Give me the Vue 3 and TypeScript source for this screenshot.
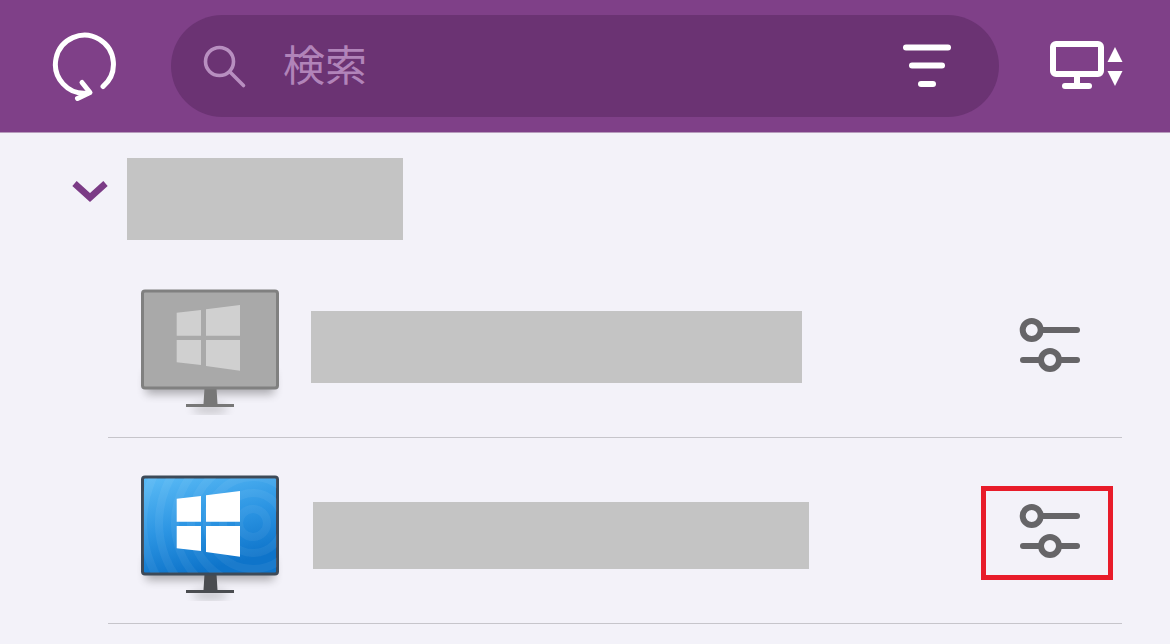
<script setup lang="ts">
interface Machine {
  id: string;
  active: boolean;
  marked: boolean;
}

const machines: Machine[] = [
  { id: 'offline', active: false, marked: false },
  { id: 'online', active: true, marked: true },
];

const rings = [14, 30, 46, 62, 78, 94, 110, 126];
</script>

<template>
  <div class="page">
    <header class="topbar">
      <button class="reload" type="button">
        <svg width="70" height="74" viewBox="49 29 70 74" fill="none" stroke="#fff" stroke-width="5" stroke-linecap="round" stroke-linejoin="round">
          <path d="M101 86.5A29 29 0 1 0 86 93" />
          <path d="M80 82.5 88 92.5 75.5 98.5" />
        </svg>
      </button>
      <div class="search">
        <svg class="search-icon" width="48" height="48" viewBox="200 44 48 48" fill="none" stroke="#b88fc0" stroke-width="3.6" stroke-linecap="round">
          <circle cx="219.5" cy="63.5" r="14" />
          <path d="M230 74 243.5 87.5" />
        </svg>
        <span class="search-label">検索</span>
        <svg class="filter-icon" width="54" height="48" viewBox="900 42 54 48" fill="none" stroke="#fff" stroke-width="6" stroke-linecap="round">
          <path d="M906 47.5H948" />
          <path d="M912 65.5H942" />
          <path d="M921 84H933" />
        </svg>
      </div>
      <button class="display-switch" type="button">
        <svg width="76" height="52" viewBox="1048 38 76 52">
          <g fill="none" stroke="#fff" stroke-width="6" stroke-linecap="round" stroke-linejoin="round">
            <rect x="1053" y="44" width="48" height="30" rx="3" />
            <path d="M1077 75V85" />
            <path d="M1065 86H1089" />
          </g>
          <path d="M1115 47 1122.5 62H1107.5Z" fill="#fff" />
          <path d="M1107.5 71H1122.5L1115 86Z" fill="#fff" />
        </svg>
      </button>
    </header>

    <main class="content">
      <div class="group-head">
        <svg class="chevron" width="40" height="30" viewBox="70 176 40 30" fill="none" stroke="#7b3b86" stroke-width="6.5">
          <path d="M74.5 182.5 90 196.5 105.5 182.5" />
        </svg>
        <div class="group-title"></div>
      </div>

      <div class="machines">
        <div v-for="machine in machines" :key="machine.id" class="machine" :class="machine.id">
          <svg class="monitor" width="160" height="130" viewBox="130 285 160 130">
            <defs>
              <filter :id="`blur-${machine.id}`" x="-30%" y="-80%" width="160%" height="260%">
                <feGaussianBlur stdDeviation="5" />
              </filter>
              <linearGradient :id="`screen-${machine.id}`" x1="0" y1="0" x2="0.35" y2="1">
                <stop offset="0" stop-color="#5cbcf6" />
                <stop offset="0.55" stop-color="#2c95e3" />
                <stop offset="1" stop-color="#0e74ca" />
              </linearGradient>
              <clipPath :id="`clip-${machine.id}`">
                <rect x="143" y="292" width="134" height="95" />
              </clipPath>
            </defs>
            <rect x="146" y="372" width="128" height="22" fill="#000" opacity="0.3" :filter="`url(#blur-${machine.id})`" />
            <ellipse cx="210" cy="409" rx="18" ry="5" fill="#000" opacity="0.18" :filter="`url(#blur-${machine.id})`" />
            <path d="M204.5 388H216.5L217.5 404H203.5Z" :fill="machine.active ? '#4a4c50' : '#777'" />
            <rect x="186" y="404" width="48" height="3" :fill="machine.active ? '#4a4c50' : '#777'" />
            <rect
              x="142.5"
              y="291"
              width="135"
              height="97"
              rx="2.5"
              :fill="machine.active ? `url(#screen-${machine.id})` : '#a9a9a9'"
              :stroke="machine.active ? '#3d4a58' : '#808080'"
              stroke-width="3"
            />
            <g v-if="machine.active" :clip-path="`url(#clip-${machine.id})`" fill="none" stroke="#fff" stroke-width="8" opacity="0.05">
              <circle v-for="r in rings" :key="r" cx="253" cy="337" :r="r" />
            </g>
            <g :fill="machine.active ? '#fff' : '#d0d0d0'">
              <path d="M176.7 312.7 201 310V335.7H176.7Z" />
              <path d="M206 309.3 240 305V335.7H206Z" />
              <path d="M176.7 340H201V365L176.7 362.3Z" />
              <path d="M206 340H240V370.7L206 366Z" />
            </g>
          </svg>
          <div class="machine-name"></div>
          <button class="settings" :class="{ marked: machine.marked }" type="button">
            <svg width="66" height="60" viewBox="0 0 66 60" fill="none" stroke="#666568" stroke-width="6" stroke-linecap="round">
              <circle cx="14.7" cy="15" r="9" />
              <path d="M24 15H60" />
              <path d="M6 45H24" />
              <circle cx="33" cy="45" r="9" />
              <path d="M42 45H60" />
            </svg>
          </button>
        </div>
      </div>
    </main>
  </div>
</template>

<style scoped>
.page {
  width: 1170px;
  height: 644px;
  overflow: hidden;
  background: #f3f2f9;
  font-family: "Noto Sans CJK JP", "Noto Sans", sans-serif;
}
button {
  padding: 0;
  background: none;
  border: none;
}
svg {
  display: block;
}
.topbar {
  display: flex;
  align-items: center;
  height: 132px;
  background: #7f4088;
  border-bottom: 1px solid #b79bbd;
  box-sizing: content-box;
}
.reload {
  width: 120px;
  margin-left: 51px;
  margin-bottom: 0;
}
.search {
  display: flex;
  align-items: center;
  width: 828px;
  height: 102px;
  background: #6b3373;
  border-radius: 51px;
}
.search-icon {
  margin-left: 29px;
  margin-bottom: 1px;
}
.search-label {
  margin-left: 35px;
  margin-bottom: 6px;
  font-size: 42px;
  line-height: 1;
  color: #b184b9;
}
.filter-icon {
  margin-left: auto;
  margin-right: 45px;
}
.display-switch {
  margin-left: 49px;
  margin-bottom: 4px;
}
.content {
  padding-top: 25px;
}
.group-head {
  display: flex;
  align-items: center;
  height: 82px;
  margin-bottom: 12px;
}
.chevron {
  margin-left: 70px;
  margin-bottom: 15px;
}
.group-title {
  width: 276px;
  height: 82px;
  margin-left: 17px;
  background: #c4c4c4;
}
.machines {
  margin: 0 48px 0 108px;
}
.machine {
  display: flex;
  align-items: flex-start;
  height: 185px;
  padding: 0 9px 0 22px;
  border-bottom: 1px solid #c6c5cb;
}
.monitor {
  margin-top: 33px;
  flex: none;
}
.machine-name {
  background: #c4c4c4;
}
.offline .machine-name {
  width: 491px;
  height: 72px;
  margin: 59px 0 0 21px;
}
.online .machine-name {
  width: 496px;
  height: 67px;
  margin: 64px 0 0 23px;
}
.settings {
  display: flex;
  align-items: center;
  justify-content: center;
  box-sizing: border-box;
  width: 132px;
  height: 94px;
  margin: 48px 0 0 auto;
  padding: 0 0 4px 6px;
  border: 5px solid transparent;
}
.settings.marked {
  border-color: #e81c2a;
}
</style>
